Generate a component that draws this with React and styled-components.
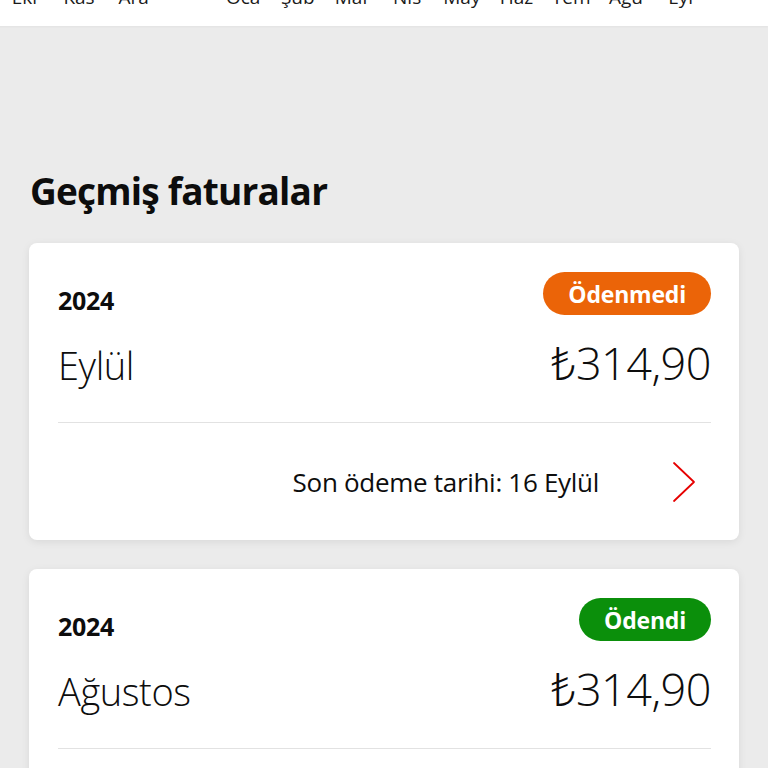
import React from "react";
import styled, { createGlobalStyle } from "styled-components";

const GlobalStyle = createGlobalStyle`
  html, body { margin: 0; padding: 0; }
  body {
    background: #ebebeb;
    font-family: "Open Sans", "Noto Sans", sans-serif;
    color: #0d0d0d;
  }
  * { box-sizing: border-box; }
`;

const Page = styled.div`
  display: flex;
  flex-direction: column;
  min-height: 768px;
  overflow: hidden;
`;

const MonthBand = styled.div`
  background: #ffffff;
  height: 26px;
  overflow: hidden;
  display: flex;
  margin-left: -3px;
  box-shadow: 0 1px 2px rgba(0, 0, 0, 0.04);
`;

const Month = styled.span`
  flex: 0 0 54.7px;
  text-align: center;
  font-size: 19px;
  line-height: 19px;
  margin-top: -12px;
  color: #1a1a1a;
  height: 19px;
`;

const Heading = styled.h1`
  margin: 142px 0 0 30px;
  font-size: 37px;
  line-height: 46px;
  font-weight: 700;
  letter-spacing: -0.8px;
  color: #0d0d0d;
`;

const CardList = styled.div`
  display: flex;
  flex-direction: column;
  gap: 29px;
  margin: 29px 29px 0 29px;
`;

const Card = styled.div`
  background: #ffffff;
  border-radius: 8px;
  box-shadow: 0 2px 8px rgba(0, 0, 0, 0.08);
  padding: 29px 28px 0 29px;
`;

const TopRow = styled.div`
  display: flex;
  justify-content: space-between;
  align-items: center;
`;

const Year = styled.span`
  font-size: 25px;
  font-weight: 700;
  line-height: 30px;
  padding-top: 12px;
  letter-spacing: -0.3px;
`;

const Badge = styled.span`
  display: inline-flex;
  align-items: center;
  justify-content: center;
  height: 43px;
  padding: 0 25px;
  border-radius: 22px;
  background: ${(p) => (p.$paid ? "#0b8f0b" : "#eb6408")};
  color: #ffffff;
  font-size: 23px;
  font-weight: 700;
  letter-spacing: -0.2px;
`;

const AmountRow = styled.div`
  display: flex;
  justify-content: space-between;
  align-items: baseline;
  margin-top: 23px;
  padding-bottom: 32px;
  border-bottom: 1px solid #e2e2e2;
`;

const MonthName = styled.span`
  font-size: 38px;
  font-weight: 300;
  line-height: 50px;
  letter-spacing: -0.4px;
`;

const Amount = styled.span`
  font-size: 45px;
  font-weight: 300;
  line-height: 50px;
  letter-spacing: -0.5px;
`;

const Footer = styled.div`
  display: flex;
  justify-content: flex-end;
  align-items: center;
  height: 117px;
  gap: 72px;
  padding-right: 14px;
`;

const DueText = styled.span`
  font-size: 26px;
  font-weight: 400;
  letter-spacing: -0.3px;
`;

const Chevron = () => (
  <svg width="26" height="42" viewBox="0 0 26 42" fill="none">
    <path d="M3 2 L23 21 L3 40" stroke="#e60000" strokeWidth="1.8" strokeLinecap="round" strokeLinejoin="round" />
  </svg>
);

const months = ["Eki", "Kas", "Ara", "", "Oca", "Şub", "Mar", "Nis", "May", "Haz", "Tem", "Ağu", "Eyl"];

const bills = [
  { year: "2024", month: "Eylül", amount: "₺314,90", paid: false, due: "Son ödeme tarihi: 16 Eylül" },
  { year: "2024", month: "Ağustos", amount: "₺314,90", paid: true, due: "Son ödeme tarihi: 16 Ağustos" },
];

export default function App() {
  return (
    <Page>
      <GlobalStyle />
      <MonthBand>
        {months.map((m, i) => (
          <Month key={i}>{m}</Month>
        ))}
      </MonthBand>
      <Heading>Geçmiş faturalar</Heading>
      <CardList>
        {bills.map((b, i) => (
          <Card key={i}>
            <TopRow>
              <Year>{b.year}</Year>
              <Badge $paid={b.paid}>{b.paid ? "Ödendi" : "Ödenmedi"}</Badge>
            </TopRow>
            <AmountRow>
              <MonthName>{b.month}</MonthName>
              <Amount>{b.amount}</Amount>
            </AmountRow>
            <Footer>
              <DueText>{b.due}</DueText>
              <Chevron />
            </Footer>
          </Card>
        ))}
      </CardList>
    </Page>
  );
}
